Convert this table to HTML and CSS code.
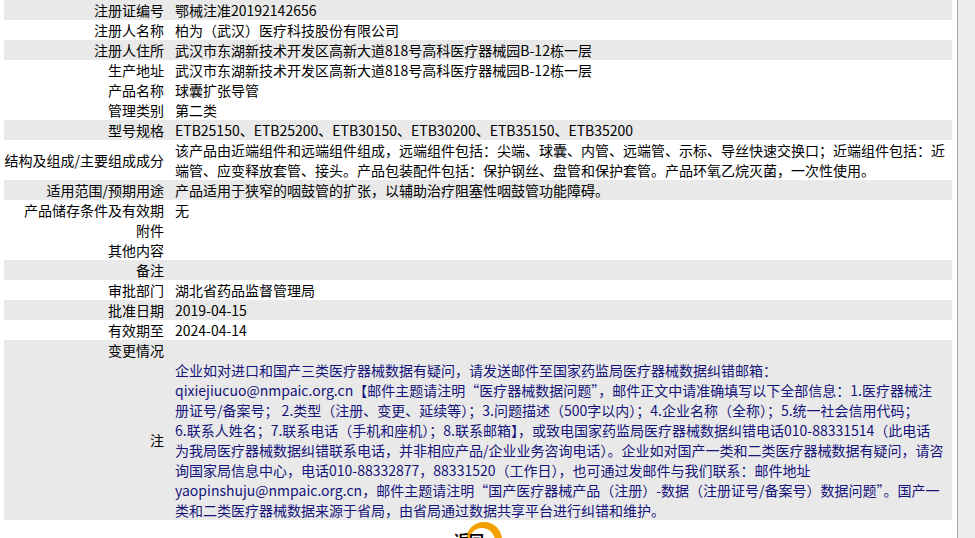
FILE: index.html
```html
<!DOCTYPE html>
<html lang="zh-CN">
<head>
<meta charset="utf-8">
<title>医疗器械详情</title>
<link rel="stylesheet" href="styles.css">
</head>
<body>
<div class="page">
  <div class="main">
    <table class="info">
      <tr class="g"><td class="lb">注册证编号</td><td class="val">鄂械注准20192142656</td></tr>
      <tr><td class="lb">注册人名称</td><td class="val">柏为（武汉）医疗科技股份有限公司</td></tr>
      <tr class="g"><td class="lb">注册人住所</td><td class="val">武汉市东湖新技术开发区高新大道818号高科医疗器械园B-12栋一层</td></tr>
      <tr><td class="lb">生产地址</td><td class="val">武汉市东湖新技术开发区高新大道818号高科医疗器械园B-12栋一层</td></tr>
      <tr><td class="lb">产品名称</td><td class="val">球囊扩张导管</td></tr>
      <tr><td class="lb">管理类别</td><td class="val">第二类</td></tr>
      <tr class="g"><td class="lb">型号规格</td><td class="val">ETB25150、ETB25200、ETB30150、ETB30200、ETB35150、ETB35200</td></tr>
      <tr><td class="lb">结构及组成/主要组成成分</td><td class="val"><span class="ln">该产品由近端组件和远端组件组成，远端组件包括：尖端、球囊、内管、远端管、示标、导丝快速交换口；近端组件包括：近</span><br><span class="ln">端管、应变释放套管、接头。产品包装配件包括：保护钢丝、盘管和保护套管。产品环氧乙烷灭菌，一次性使用。</span></td></tr>
      <tr class="g"><td class="lb">适用范围/预期用途</td><td class="val">产品适用于狭窄的咽鼓管的扩张，以辅助治疗阻塞性咽鼓管功能障碍。</td></tr>
      <tr><td class="lb">产品储存条件及有效期</td><td class="val">无</td></tr>
      <tr><td class="lb">附件</td><td class="val"></td></tr>
      <tr><td class="lb">其他内容</td><td class="val"></td></tr>
      <tr class="g"><td class="lb">备注</td><td class="val"></td></tr>
      <tr><td class="lb">审批部门</td><td class="val">湖北省药品监督管理局</td></tr>
      <tr class="g"><td class="lb">批准日期</td><td class="val">2019-04-15</td></tr>
      <tr><td class="lb">有效期至</td><td class="val">2024-04-14</td></tr>
      <tr class="g"><td class="lb">变更情况</td><td class="val"></td></tr>
      <tr class="g"><td class="lb">注</td><td class="val note"><span class="ln">企业如对进口和国产三类医疗器械数据有疑问，请发送邮件至国家药监局医疗器械数据纠错邮箱：</span><br><span class="ln">qixiejiucuo@nmpaic.org.cn【邮件主题请注明“医疗器械数据问题”，邮件正文中请准确填写以下全部信息：1.医疗器械注</span><br><span class="ln">册证号/备案号； 2.类型（注册、变更、延续等）；3.问题描述（500字以内）；4.企业名称（全称）；5.统一社会信用代码；</span><br><span class="ln">6.联系人姓名；7.联系电话（手机和座机）；8.联系邮箱】，或致电国家药监局医疗器械数据纠错电话010-88331514（此电话</span><br><span class="ln">为我局医疗器械数据纠错联系电话，并非相应产品/企业业务咨询电话）。企业如对国产一类和二类医疗器械数据有疑问，请咨</span><br><span class="ln">询国家局信息中心，电话010-88332877，88331520（工作日），也可通过发邮件与我们联系：邮件地址</span><br><span class="ln">yaopinshuju@nmpaic.org.cn，邮件主题请注明“国产医疗器械产品（注册）-数据（注册证号/备案号）数据问题”。国产一</span><br><span class="ln">类和二类医疗器械数据来源于省局，由省局通过数据共享平台进行纠错和维护。</span></td></tr>
    </table>
    <div class="btnwrap">
      <a class="back" href="#"><span class="ring"></span><span class="btext">返回</span></a>
    </div>
  </div>
  <div class="track"></div>
</div>
</body>
</html>
```

FILE: styles.css
```css
html, body {
  margin: 0;
  padding: 0;
  background: #fff;
}
body {
  font-family: "Noto Sans CJK SC", "Microsoft YaHei", sans-serif;
  font-size: 14px;
  color: #000;
}
.page {
  display: flex;
  height: 538px;
  overflow: hidden;
}
.main {
  width: 957px;
  flex: none;
  padding-left: 4px;
  box-sizing: border-box;
}
.track {
  flex: 1;
  border-left: 1px solid #a6a6a6;
  background: #eeeeee;
}
.info {
  width: 948px;
  border-collapse: collapse;
  border-spacing: 0;
}
.info td {
  padding: 0;
  line-height: 20px;
  vertical-align: top;
}
.info tr.g td {
  background: #e9e9e9;
}
.info td.lb {
  width: 160px;
  padding-right: 8px;
  text-align: right;
  vertical-align: middle;
  white-space: nowrap;
}
.info td.val {
  padding-left: 3px;
  height: 20px;
}
.ln {
  white-space: nowrap;
}
.info td.note {
  color: #14147a;
}
.btnwrap {
  text-align: center;
  padding-top: 2px;
  width: 948px;
}
.back {
  position: relative;
  display: inline-block;
  width: 48px;
  height: 36px;
  text-decoration: none;
  color: #000;
}
.ring {
  position: absolute;
  left: 12px;
  top: 0;
  width: 36px;
  height: 36px;
  border-radius: 50%;
  background: #f3a100;
}
.ring::after {
  content: "";
  position: absolute;
  left: 3px;
  top: 6px;
  width: 26px;
  height: 28px;
  border-radius: 50%;
  background: #fff;
}
.btext {
  position: absolute;
  left: 0;
  top: 8px;
  font-size: 15px;
  font-weight: bold;
  line-height: 20px;
}
```
